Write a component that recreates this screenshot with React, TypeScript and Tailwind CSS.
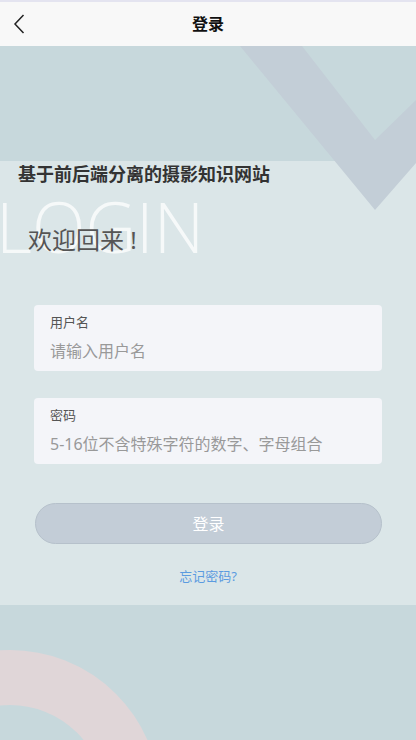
import React from 'react';

const FONT = { fontFamily: '"Noto Sans", "Noto Sans CJK SC", sans-serif' };

function Field({ label, placeholder }: { label: string; placeholder: string }) {
  return (
    <div className="mx-[34px] h-[66px] rounded-[4px] bg-[#f4f5f9] px-4 pt-[8px]">
      <div className="text-[13px] leading-[18px] text-[#555]">{label}</div>
      <div className="mt-[9px] text-[16px] leading-[22px] text-[#999]">{placeholder}</div>
    </div>
  );
}

export default function App() {
  return (
    <div style={FONT} className="flex h-[740px] w-[416px] flex-col overflow-hidden border-t-2 border-[#e4e4f0] bg-[#c7d8dc]">
      {/* Header */}
      <div className="relative flex h-[44px] shrink-0 items-center justify-center bg-[#f8f8f8]">
        <svg className="absolute left-[12px] top-[11px]" width="16" height="22" viewBox="0 0 16 22" fill="none">
          <path d="M11.5 2 L3 11 L11.5 20" stroke="#222" strokeWidth="1.5" />
        </svg>
        <span className="text-[16px] font-bold text-[#111]">登录</span>
      </div>

      {/* Body */}
      <div className="relative flex flex-1 flex-col">
        <div className="h-[115px] shrink-0" />

        <div className="relative h-[444px] shrink-0 bg-[#dbe6e8]">
          <div className="pointer-events-none absolute left-[-4px] top-[30px] text-[70px] font-light leading-[70px] text-white/75" style={{ fontFamily: '"Open Sans", sans-serif' }}>
            LOGIN
          </div>
          <div className="relative">
            <div className="pl-[18px] pt-[1px] text-[18px] font-bold leading-[24px] text-[#333]">基于前后端分离的摄影知识网站</div>
            <div className="mt-[38px] pl-[28px] text-[24px] leading-[32px] text-[#555]">欢迎回来 !</div>
            <div className="mt-[49px] flex flex-col gap-[27px]">
              <Field label="用户名" placeholder="请输入用户名" />
              <Field label="密码" placeholder="5-16位不含特殊字符的数字、字母组合" />
            </div>
            <button className="mx-[35px] mt-[39px] flex h-[41px] w-[347px] items-center justify-center rounded-full border border-[#b6c1cb] bg-[#c3cdd7] text-[16px] text-white">
              登录
            </button>
            <div className="mt-[23px] text-center text-[13px] text-[#5b9be0]">忘记密码?</div>
          </div>
        </div>

        {/* V decoration, over the panel */}
        <svg className="pointer-events-none absolute left-0 top-0" width="416" height="180" viewBox="0 0 416 180">
          <polygon points="240,0 302,0 375,94 416,54 416,117 375,164" fill="#c3ced7" />
        </svg>

        {/* ring decoration */}
        <svg className="absolute bottom-0 left-0" width="160" height="100" viewBox="0 0 160 100">
          <circle cx="10" cy="160" r="122.5" fill="none" stroke="#e0d6d8" strokeWidth="55" />
        </svg>
      </div>
    </div>
  );
}
